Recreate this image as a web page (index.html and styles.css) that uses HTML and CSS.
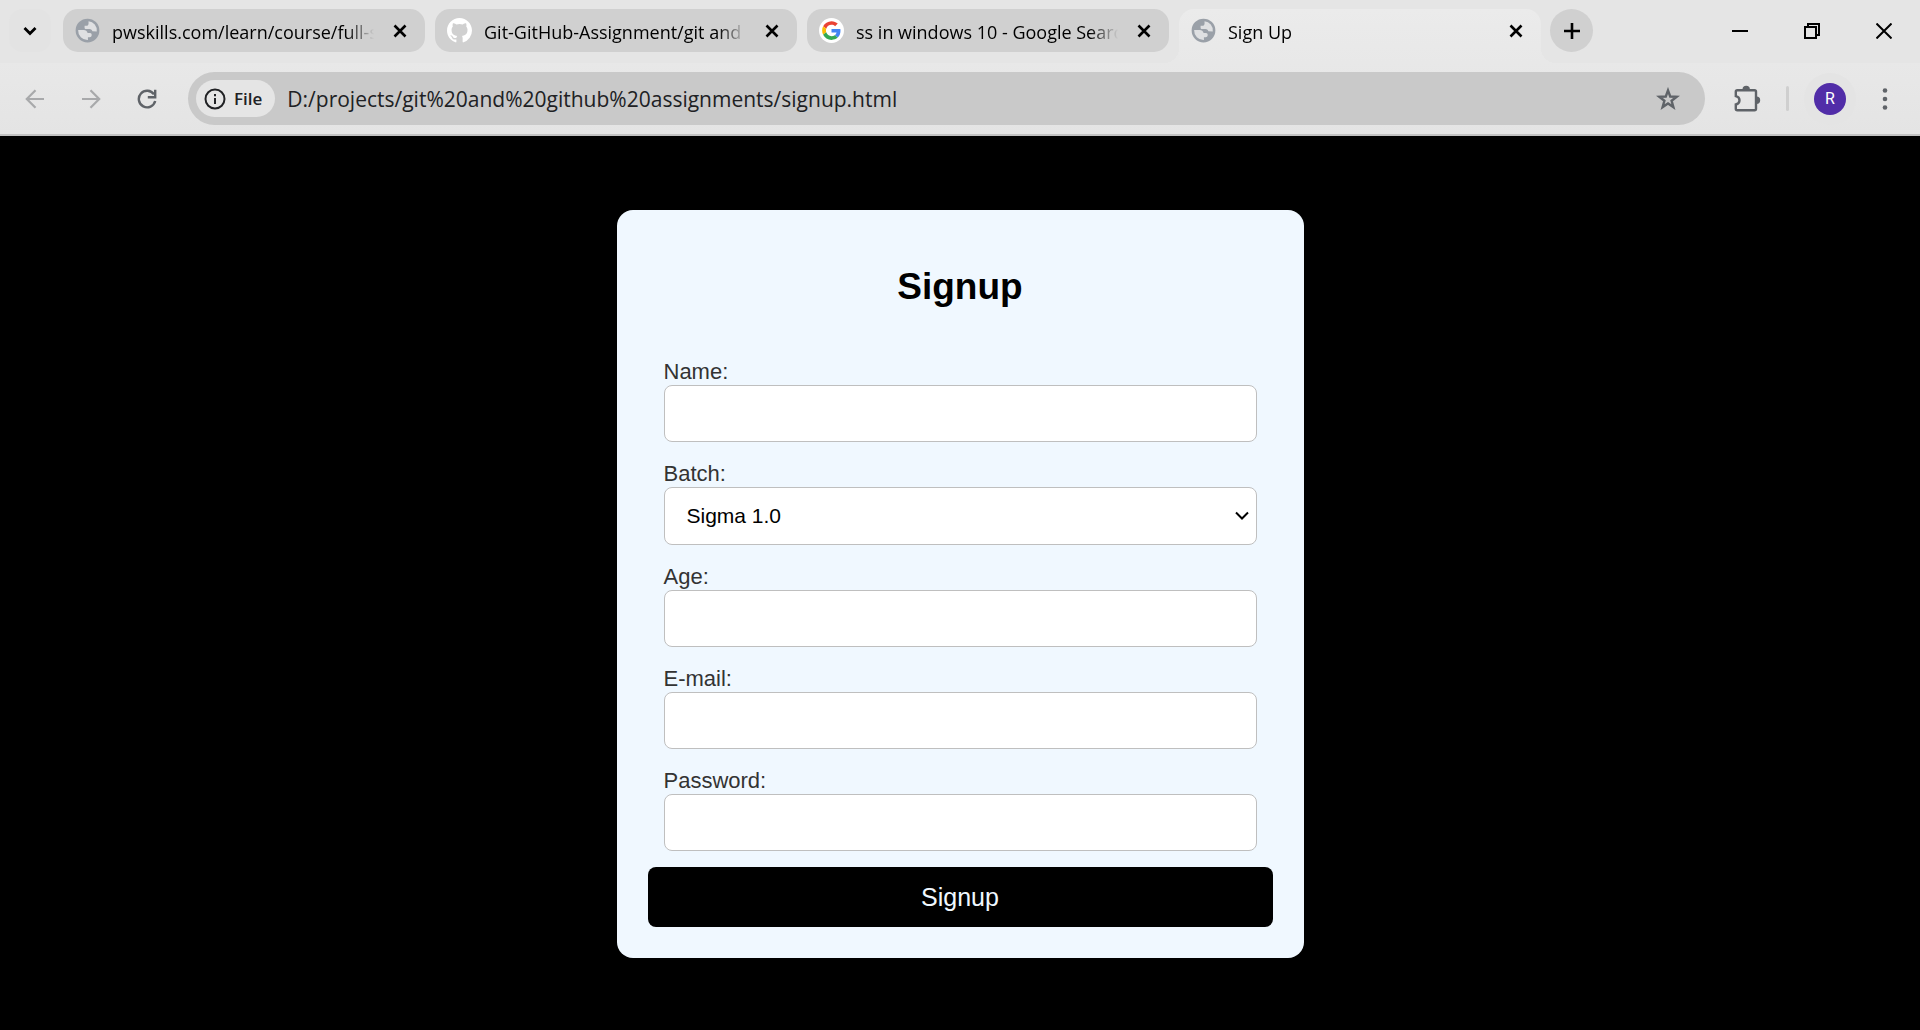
FILE: index.html
```html
<!DOCTYPE html>
<html lang="en">
<head>
<meta charset="utf-8">
<meta name="viewport" content="width=device-width, initial-scale=1">
<title>Sign Up</title>
<link rel="stylesheet" href="styles.css">
</head>
<body>
<svg class="sprite" width="0" height="0" aria-hidden="true">
  <symbol id="globe" viewBox="0 0 24 24">
    <circle cx="12" cy="12" r="10.4" fill="#dfe0e2"/>
    <path fill="#9aa0a8" fill-rule="evenodd" d="M12 .6a11.4 11.4 0 1 0 0 22.8A11.4 11.4 0 0 0 12 .6zM3 11.600h5.500c1.700 0 3.200 1.200 3.600 2.800l2.400.1c.9 0 1.500.7 1.500 1.500v.6c0 1.100-.9 1.900-1.900 1.900h-1.700v2.500A9 9 0 0 1 3 11.600zM13 3.050v2.450c0 1.100-.9 2-2 2H9.200v1.800c0 .7.5 1.200 1.200 1.200h3.400c1.800 0 2.600.9 2.900 2.300l4.200.1A9 9 0 0 0 13 3.050z"/>
  </symbol>
  <symbol id="cross" viewBox="0 0 14 14">
    <path d="M1.500 1.500l11 11M12.500 1.500l-11 11" fill="none" stroke="#000" stroke-width="2.600"/>
  </symbol>
</svg>

<header class="browser">
  <div class="strip">
    <button class="search-tabs" type="button" aria-label="Search tabs">
      <svg width="14" height="10" viewBox="0 0 14 10"><path d="M1.500 2l5.500 5.500L12.500 2" fill="none" stroke="#000" stroke-width="2.800"/></svg>
    </button>
    <nav class="tabs" aria-label="Tabs">
      <div class="tab">
        <svg class="favicon" viewBox="0 0 24 24"><use href="#globe"/></svg>
        <a class="tab-title" href="#">pwskills.com/learn/course/full-s</a>
        <button class="tab-close" type="button" aria-label="Close tab"><svg width="14" height="14"><use href="#cross"/></svg></button>
      </div>
      <div class="tab">
        <svg class="favicon" viewBox="0 0 16 16"><path fill="#fff" d="M8 0C3.580 0 0 3.580 0 8c0 3.540 2.290 6.530 5.470 7.590.4.070.55-.17.55-.38 0-.19-.01-.82-.01-1.490-2.010.37-2.530-.49-2.690-.94-.09-.23-.48-.94-.82-1.130-.28-.15-.68-.52-.01-.53.63-.01 1.080.58 1.230.82.72 1.210 1.870.87 2.330.66.07-.52.28-.87.51-1.070-1.780-.2-3.640-.89-3.640-3.950 0-.87.31-1.590.82-2.150-.08-.2-.36-1.020.08-2.120 0 0 .67-.21 2.200.82a7.600 7.600 0 0 1 4 0c1.530-1.040 2.200-.82 2.200-.82.44 1.100.16 1.920.08 2.120.51.56.82 1.270.82 2.150 0 3.070-1.870 3.750-3.650 3.950.29.25.54.73.54 1.480 0 1.070-.01 1.930-.01 2.200 0 .21.15.46.55.38A8.010 8.010 0 0 0 16 8c0-4.420-3.580-8-8-8z"/></svg>
        <a class="tab-title" href="#">Git-GitHub-Assignment/git and</a>
        <button class="tab-close" type="button" aria-label="Close tab"><svg width="14" height="14"><use href="#cross"/></svg></button>
      </div>
      <div class="tab">
        <svg class="favicon" viewBox="0 0 64 64"><circle cx="32" cy="32" r="32" fill="#fff"/><g transform="translate(8 8)"><path fill="#ea4335" d="M24 9.500c3.540 0 6.710 1.220 9.210 3.600l6.850-6.850C35.900 2.380 30.470 0 24 0 14.620 0 6.510 5.380 2.560 13.220l7.980 6.190C12.430 13.720 17.740 9.500 24 9.500z"/><path fill="#4285f4" d="M46.980 24.550c0-1.570-.15-3.090-.38-4.550H24v9.020h12.940c-.58 2.960-2.260 5.480-4.780 7.180l7.730 6c4.510-4.180 7.090-10.360 7.090-17.650z"/><path fill="#fbbc05" d="M10.530 28.590c-.48-1.450-.76-2.990-.76-4.590s.27-3.140.76-4.590l-7.980-6.190C.92 16.460 0 20.120 0 24c0 3.880.92 7.540 2.560 10.780l7.970-6.190z"/><path fill="#34a853" d="M24 48c6.480 0 11.930-2.130 15.890-5.810l-7.730-6c-2.150 1.450-4.920 2.300-8.160 2.300-6.260 0-11.570-4.220-13.470-9.910l-7.980 6.190C6.510 42.620 14.620 48 24 48z"/></g></svg>
        <a class="tab-title" href="#">ss in windows 10 - Google Searc</a>
        <button class="tab-close" type="button" aria-label="Close tab"><svg width="14" height="14"><use href="#cross"/></svg></button>
      </div>
      <div class="tab active">
        <svg class="favicon" viewBox="0 0 24 24"><use href="#globe"/></svg>
        <a class="tab-title" href="#" aria-current="page">Sign Up</a>
        <button class="tab-close" type="button" aria-label="Close tab"><svg width="14" height="14"><use href="#cross"/></svg></button>
      </div>
    </nav>
    <button class="new-tab" type="button" aria-label="New tab">
      <svg width="16" height="16" viewBox="0 0 16 16"><path d="M8 0v16M0 8h16" stroke="#000" stroke-width="2.600"/></svg>
    </button>
    <div class="window-controls">
      <button type="button" aria-label="Minimize"><svg width="16" height="16" viewBox="0 0 16 16"><path d="M0 8h16" stroke="#000" stroke-width="2"/></svg></button>
      <button type="button" aria-label="Restore"><svg width="16" height="16" viewBox="0 0 16 16"><path d="M1 4h11v11H1zM4 4V1h11v11h-3" fill="none" stroke="#000" stroke-width="2"/></svg></button>
      <button type="button" aria-label="Close"><svg width="16" height="16" viewBox="0 0 16 16"><path d="M.5.5l15 15M15.500.5l-15 15" stroke="#000" stroke-width="2"/></svg></button>
    </div>
  </div>

  <div class="toolbar">
    <button class="tool" type="button" aria-label="Back"><svg width="20" height="20" viewBox="0 0 20 20"><path d="M19 10H2M10.500 1.300L1.800 10l8.700 8.700" fill="none" stroke="#a8a9ab" stroke-width="2.200"/></svg></button>
    <button class="tool" type="button" aria-label="Forward"><svg width="20" height="20" viewBox="0 0 20 20"><path d="M1 10h17M9.500 1.300l8.700 8.700-8.700 8.700" fill="none" stroke="#a8a9ab" stroke-width="2.200"/></svg></button>
    <button class="tool" type="button" aria-label="Reload"><svg width="20" height="20" viewBox="0 0 20 20"><path d="M17 5.400A8.300 8.300 0 1 0 18.200 12" fill="none" stroke="#5f6368" stroke-width="2.400"/><path d="M18.200.8v7.400h-7.400" fill="none" stroke="#5f6368" stroke-width="2.400"/></svg></button>
    <div class="omnibox">
      <button class="site-info" type="button">
        <svg width="22" height="22" viewBox="0 0 22 22"><circle cx="11" cy="11" r="9.500" fill="none" stroke="#202124" stroke-width="2"/><path d="M10 10h2v6h-2zM10 6h2v2.200h-2z" fill="#202124"/></svg>
        File
      </button>
      <input class="address" type="text" aria-label="Address" value="D:/projects/git%20and%20github%20assignments/signup.html">
      <button class="bookmark" type="button" aria-label="Bookmark this page"><svg width="24" height="24" viewBox="0 0 24 24"><path d="M12 3.400l2.200 6.100 6.500.3-5.100 4 1.800 6.300-5.400-3.600-5.400 3.600 1.800-6.300-5.100-4 6.500-.3z" fill="none" stroke="#5f6368" stroke-width="2.400"/></svg></button>
    </div>
    <button class="extensions" type="button" aria-label="Extensions"><svg width="28" height="28" viewBox="0 0 28 28"><path d="M4.300 5.300h17.200a1.500 1.500 0 0 1 1.500 1.500v17a1.500 1.500 0 0 1-1.500 1.500H4.300a1.500 1.500 0 0 1-1.500-1.500v-4.300c2.200-.5 3.700-2 3.700-4.200s-1.500-3.700-3.700-4.200V6.800a1.500 1.500 0 0 1 1.500-1.500z" fill="none" stroke="#5f6368" stroke-width="2.400"/><path d="M9.500 4.500a3.700 3.700 0 0 1 7.400 0zM23.500 11.600a3.700 3.700 0 0 1 0 7.400z" fill="#5f6368"/></svg></button>
    <span class="divider"></span>
    <button class="profile" type="button" aria-label="Profile"><span class="avatar">R</span></button>
    <button class="menu" type="button" aria-label="Menu"><svg width="6" height="22" viewBox="0 0 6 22" fill="#5f6368"><circle cx="3" cy="2.500" r="2.300"/><circle cx="3" cy="11" r="2.300"/><circle cx="3" cy="19.500" r="2.300"/></svg></button>
  </div>
</header>

<main class="page">
  <form class="card">
    <h1>Signup</h1>
    <div class="fields">
      <div class="field">
        <label for="name">Name:</label>
        <input id="name" type="text">
      </div>
      <div class="field">
        <label for="batch">Batch:</label>
        <div class="select">
          <select id="batch"><option>Sigma 1.0</option><option>Sigma 2.0</option></select>
          <svg width="14" height="10" viewBox="0 0 14 10"><path d="M1 1.500l6 6 6-6" fill="none" stroke="#000" stroke-width="2"/></svg>
        </div>
      </div>
      <div class="field">
        <label for="age">Age:</label>
        <input id="age" type="text" inputmode="numeric">
      </div>
      <div class="field">
        <label for="email">E-mail:</label>
        <input id="email" type="email">
      </div>
      <div class="field">
        <label for="password">Password:</label>
        <input id="password" type="password">
      </div>
    </div>
    <button class="submit" type="submit">Signup</button>
  </form>
</main>
</body>
</html>
```
FILE: styles.css
```css
* {
  box-sizing: border-box;
}

body {
  margin: 0;
  min-height: 100vh;
  display: flex;
  flex-direction: column;
  background: #000;
  font-family: "Liberation Sans", Arial, sans-serif;
}

button {
  display: flex;
  align-items: center;
  justify-content: center;
  margin: 0;
  padding: 0;
  border: 0;
  background: none;
  font: inherit;
  color: inherit;
}

svg {
  display: block;
  flex: none;
}

.sprite {
  position: absolute;
}

/* Browser window */
.browser {
  background: #e5e5e5;
  border-bottom: 2px solid #c2c2c2;
  font-family: "Open Sans", "Noto Sans", sans-serif;
}

.strip {
  display: flex;
  align-items: flex-start;
  padding: 9px 0 0 9px;
}

.search-tabs {
  width: 42px;
  height: 43px;
  margin-right: 12px;
  border-radius: 14px;
  background: #e3e3e3;
}

.tabs {
  display: flex;
  flex: 0 1 1478px;
  gap: 10px;
  min-width: 0;
}

.tab {
  display: flex;
  flex: 1 1 0;
  align-items: center;
  min-width: 0;
  height: 43px;
  padding: 0 15px 0 12px;
  border-radius: 15px;
  background: #d0d0d0;
}

.tab.active {
  position: relative;
  height: 54px;
  padding-bottom: 11px;
  border-radius: 15px 15px 0 0;
  background: linear-gradient(#ebebeb, #e8e8e8);
}

.tab.active::before,
.tab.active::after {
  content: "";
  position: absolute;
  bottom: 0;
  width: 15px;
  height: 15px;
}

.tab.active::before {
  right: 100%;
  background: radial-gradient(circle at 0 0, transparent 15px, #e8e8e8 15px);
}

.tab.active::after {
  left: 100%;
  background: radial-gradient(circle at 100% 0, transparent 15px, #e8e8e8 15px);
}

.favicon {
  width: 25px;
  height: 25px;
}

.tab-title {
  flex: 1;
  min-width: 0;
  margin: 0 12px 0 12px;
  padding-top: 2px;
  overflow: hidden;
  white-space: nowrap;
  font-size: 18px;
  line-height: 24px;
  color: #000;
  text-decoration: none;
  mask-image: linear-gradient(to left, transparent 4px, #000 32px);
}

.tab-close {
  width: 20px;
  height: 20px;
}

.new-tab {
  width: 43px;
  height: 43px;
  margin-left: 9px;
  border-radius: 50%;
  background: #d0d0d0;
}

.window-controls {
  display: flex;
  margin-left: auto;
}

.window-controls button {
  width: 72px;
  height: 43px;
}

.toolbar {
  display: flex;
  align-items: center;
  padding: 9px 6px 9px 7px;
  background: linear-gradient(#e8e8e8, #e4e4e4);
}

.tool {
  width: 56px;
  height: 53px;
}

.omnibox {
  display: flex;
  flex: 1;
  align-items: center;
  min-width: 0;
  height: 53px;
  margin: 0 16px 0 13px;
  padding: 0 12px 0 8px;
  border-radius: 27px;
  background: #c9c9c9;
}

.site-info {
  gap: 8px;
  height: 37px;
  padding: 0 13px 0 8px;
  border-radius: 19px;
  background: #e5e5e5;
  font-size: 17px;
  font-weight: 600;
  color: #202124;
}

.address {
  flex: 1;
  min-width: 0;
  padding: 0 0 0 12px;
  border: 0;
  outline: 0;
  background: none;
  font: 21px/28px "Open Sans", "Noto Sans", sans-serif;
  color: #202124;
}

.bookmark {
  width: 50px;
  height: 50px;
}

.extensions {
  width: 52px;
  height: 52px;
}

.divider {
  width: 3px;
  height: 25px;
  margin: 0 15px 0 13px;
  border-radius: 2px;
  background: #cfcfcf;
}

.profile {
  width: 52px;
  height: 52px;
  border-radius: 50%;
  background: #e4e4e4;
}

.avatar {
  width: 32px;
  height: 32px;
  border-radius: 50%;
  background: #512da8;
  font: 16px/32px Roboto, sans-serif;
  color: #fff;
}

.menu {
  width: 58px;
  height: 52px;
}

/* Sign-up page */
.page {
  display: flex;
  flex: 1;
  align-items: center;
  justify-content: center;
  padding: 18px 16px 16px;
}

.card {
  width: 100%;
  max-width: 687px;
  padding: 55px 31px 31px;
  border-radius: 16px;
  background: #f0f8ff;
}

h1 {
  margin: 0 0 50px;
  font-size: 37px;
  line-height: 44px;
  text-align: center;
}

.fields {
  display: flex;
  flex-direction: column;
  gap: 19px;
  padding: 0 16px 16px;
}

.field {
  display: flex;
  flex-direction: column;
}

label {
  font-size: 22px;
  line-height: 26px;
  color: #333;
}

.field input,
.select select {
  width: 100%;
  height: 57px;
  padding: 0 22px;
  border: 1px solid #bfbfbf;
  border-radius: 8px;
  background: #fff;
  font: 21px/24px "Liberation Sans", Arial, sans-serif;
  color: #000;
}

.select {
  display: grid;
  align-items: center;
}

.select select,
.select svg {
  grid-area: 1 / 1;
}

.select select {
  height: 58px;
  appearance: none;
}

.select svg {
  justify-self: end;
  margin-right: 8px;
  pointer-events: none;
}

.submit {
  width: 100%;
  height: 60px;
  border-radius: 8px;
  background: #000;
  font-size: 25px;
  color: #f0f8ff;
}
```
